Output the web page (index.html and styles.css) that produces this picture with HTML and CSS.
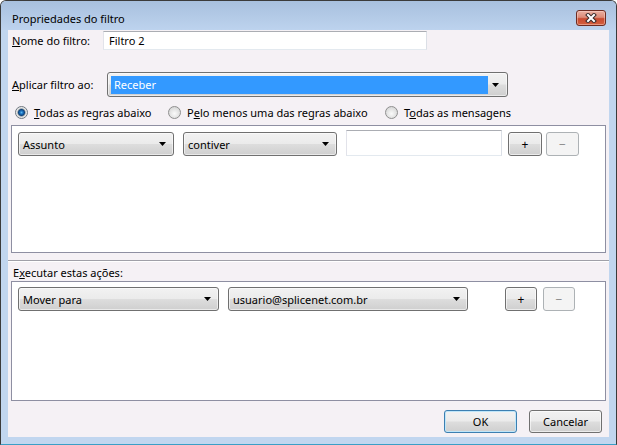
FILE: index.html
```html
<!DOCTYPE html>
<html lang="pt-BR">
<head>
  <meta charset="UTF-8">
  <title>Propriedades do filtro</title>
  <link rel="stylesheet" href="styles.css">
</head>
<body>
  <div class="window">
    <div class="titlebar">
      <span class="title">Propriedades do filtro</span>
      <button class="close" title="Fechar">
        <svg width="14" height="10" viewBox="0 0 14 10">
          <path d="M4 2 L10 8 M10 2 L4 8" stroke="#3a2a2a" stroke-width="4" stroke-linecap="square"/>
          <path d="M4 2 L10 8 M10 2 L4 8" stroke="#fff" stroke-width="2" stroke-linecap="square"/>
        </svg>
      </button>
    </div>

    <div class="content">
      <!-- nome -->
      <div class="row name-row">
        <label for="nome"><u>N</u>ome do filtro:</label>
        <input id="nome" class="textbox name-input" type="text" value="Filtro 2">
      </div>

      <!-- aplicar filtro -->
      <div class="row apply-row">
        <label><u>A</u>plicar filtro ao:</label>
        <div class="combo apply-combo">
          <span class="selected">Receber</span>
          <svg class="arrow" width="7" height="4" viewBox="0 0 7 4"><polygon points="0,0 7,0 3.5,4" fill="#000"/></svg>
        </div>
      </div>

      <!-- modo -->
      <div class="radios">
        <div class="radio r1"><span class="dot checked"></span><span><u>T</u>odas as regras abaixo</span></div>
        <div class="radio r2"><span class="dot"></span><span>P<u>e</u>lo menos uma das regras abaixo</span></div>
        <div class="radio"><span class="dot"></span><span>T<u>o</u>das as mensagens</span></div>
      </div>

      <!-- regras -->
      <div class="panel rules">
        <div class="combo w-assunto">
          <span>Assunto</span>
          <svg class="arrow" width="7" height="4" viewBox="0 0 7 4"><polygon points="0,0 7,0 3.5,4" fill="#000"/></svg>
        </div>
        <div class="combo w-contiver">
          <span>contiver</span>
          <svg class="arrow" width="7" height="4" viewBox="0 0 7 4"><polygon points="0,0 7,0 3.5,4" fill="#000"/></svg>
        </div>
        <input class="textbox rule-text" type="text">
        <button class="btn small plus-1">+</button>
        <button class="btn small minus-1" disabled>&minus;</button>
      </div>

      <div class="separator"></div>

      <div class="section-label">E<u>x</u>ecutar estas ações:</div>

      <!-- acoes -->
      <div class="panel actions">
        <div class="combo w-mover">
          <span>Mover para</span>
          <svg class="arrow" width="7" height="4" viewBox="0 0 7 4"><polygon points="0,0 7,0 3.5,4" fill="#000"/></svg>
        </div>
        <div class="combo w-pasta">
          <span>usuario@splicenet.com.br</span>
          <svg class="arrow" width="7" height="4" viewBox="0 0 7 4"><polygon points="0,0 7,0 3.5,4" fill="#000"/></svg>
        </div>
        <button class="btn small plus-2">+</button>
        <button class="btn small minus-2" disabled>&minus;</button>
      </div>

      <div class="footer">
        <button class="btn big default">OK</button>
        <button class="btn big">Cancelar</button>
      </div>
    </div>
  </div>
</body>
</html>
```

FILE: styles.css
```css
body {
  margin: 0;
  font-family: "Noto Sans", "Segoe UI", sans-serif;
  font-size: 11px;
  color: #000;
}
.window {
  width: 617px;
  height: 445px;
  box-sizing: border-box;
  border: 1px solid #3b3b3b;
  border-bottom-color: #3a9fc6;
  border-radius: 6px 6px 0 0;
  background-color: #c1d6ef;
  display: flex;
  flex-direction: column;
}
.titlebar {
  height: 29px;
  flex: 0 0 29px;
  display: flex;
  justify-content: space-between;
  align-items: flex-start;
  background: linear-gradient(#a8c0de, #bdd3ee);
  border-radius: 5px 5px 0 0;
}
.title {
  padding: 10px 0 0 11px;
  line-height: 16px;
}
.close {
  width: 30px;
  height: 16px;
  margin: 9px 10px 0 0;
  padding: 0;
  border: 1px solid #6e2c22;
  border-radius: 3px;
  background: linear-gradient(#eab0a2, #dd8b78 45%, #c84a30 55%, #d4603f);
  box-shadow: inset 0 0 0 1px rgba(255, 220, 210, 0.45);
  display: flex;
  align-items: center;
  justify-content: center;
}
.content {
  margin: 0 7px;
  height: 407px;
  flex: 0 0 407px;
  box-sizing: border-box;
  padding: 0 3px;
  background-color: #f5f1f5;
  display: flex;
  flex-direction: column;
}
.row {
  display: flex;
  align-items: center;
  padding-left: 1px;
}
.name-row {
  margin-top: 1px;
  height: 19px;
}
.name-row label {
  flex: 0 0 91px;
}
.apply-row {
  margin-top: 22px;
  height: 25px;
}
.apply-row label {
  flex: 0 0 95px;
}
.textbox {
  box-sizing: border-box;
  border: 1px solid;
  border-color: #abadb3 #dbdfe6 #e3e9ef #e2e3ea;
  background: #fff;
  font: inherit;
  color: #000;
  outline: none;
  margin: 0;
}
.name-input {
  width: 324px;
  height: 19px;
  padding: 0 5px;
}
.combo {
  box-sizing: border-box;
  height: 24px;
  border: 1px solid #707070;
  border-radius: 3px;
  background: linear-gradient(#f2f2f2, #ebebeb 48%, #dddddd 52%, #cfcfcf);
  box-shadow: inset 0 0 0 1px rgba(255, 255, 255, 0.55);
  display: flex;
  align-items: center;
  justify-content: space-between;
  padding: 0 7px 0 4px;
}
.apply-combo {
  width: 401px;
  height: 25px;
  padding: 0 8px 0 3px;
}
.selected {
  width: 377px;
  height: 18px;
  line-height: 18px;
  background-color: #3399ff;
  color: #fff;
  padding-left: 3px;
  box-sizing: border-box;
}
.radios {
  display: flex;
  align-items: center;
  height: 16px;
  margin-top: 7px;
  padding-left: 4px;
}
.radio {
  display: flex;
  align-items: center;
  gap: 6px;
}
.r1 {
  flex: 0 0 153px;
}
.r2 {
  flex: 0 0 217px;
}
.dot {
  width: 13px;
  height: 13px;
  box-sizing: border-box;
  border-radius: 50%;
  border: 1px solid #8f8f8f;
  background: radial-gradient(circle at 50% 60%, #fafafa, #d6d6d6 80%);
}
.dot.checked {
  border-color: #6f7780;
  background: radial-gradient(circle at 50% 50%, #5ab8f0 0, #1d73c0 1.5px, #0d447f 3px, #6c8092 3.6px, #dcdcdc 4.4px, #f6f6f6 6px);
}
.panel {
  margin-top: 5px;
  box-sizing: border-box;
  border: 1px solid #8e8fa2;
  background-color: #fff;
  display: flex;
  align-items: flex-start;
}
.rules {
  height: 128px;
  padding: 6px 6px;
}
.w-assunto {
  width: 156px;
}
.w-contiver {
  width: 154px;
  margin-left: 9px;
}
.rule-text {
  width: 156px;
  height: 26px;
  margin: -2px 0 0 9px;
}
.btn {
  box-sizing: border-box;
  border: 1px solid #707070;
  border-radius: 3px;
  background: linear-gradient(#f2f2f2, #ebebeb 48%, #dddddd 52%, #cfcfcf);
  box-shadow: inset 0 0 0 1px rgba(255, 255, 255, 0.6);
  font: inherit;
  color: #000;
  padding: 0;
}
.btn.small {
  height: 24px;
  font-size: 12px;
}
.btn[disabled] {
  border-color: #adb2b5;
  background: #f4f4f4;
  box-shadow: none;
  color: #8a8a8a;
}
.plus-1 {
  width: 34px;
  margin-left: 6px;
}
.minus-1 {
  width: 33px;
  margin-left: 4px;
}
.separator {
  margin: 7px -3px 0;
  border-top: 1px solid #a0a0a8;
  border-bottom: 1px solid #fff;
}
.section-label {
  margin-top: 3px;
  line-height: 16px;
  padding-left: 2px;
}
.actions {
  margin-top: 0;
  height: 120px;
  padding: 5px 6px;
}
.w-mover {
  width: 201px;
}
.w-pasta {
  width: 240px;
  margin-left: 9px;
}
.plus-2 {
  width: 32px;
  margin-left: 37px;
}
.minus-2 {
  width: 32px;
  margin-left: 6px;
}
.footer {
  display: flex;
  justify-content: flex-end;
  gap: 12px;
  margin-top: 9px;
  padding-right: 4px;
}
.btn.big {
  width: 73px;
  height: 23px;
}
.btn.default {
  border-color: #3c7fb1;
  box-shadow: inset 0 0 0 1px #bfe6f9;
}
```
